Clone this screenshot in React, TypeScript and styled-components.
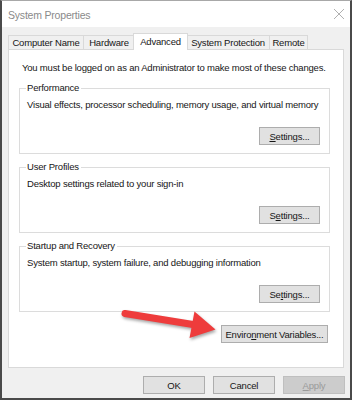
import React from "react";
import styled, { createGlobalStyle } from "styled-components";

const Global = createGlobalStyle`
  html, body { margin: 0; padding: 0; background: #ffffff; }
  body { font-family: "Liberation Sans", Arial, sans-serif; }
`;

const Window = styled.div`
  position: relative;
  box-sizing: border-box;
  width: 352px;
  height: 400px;
  border: 2px solid #4a4a4a;
  border-top: 1px solid #a8a8a8;
  display: flex;
  flex-direction: column;
  background: #f0f0f0;
  font-family: "Liberation Sans", Arial, sans-serif;
  font-size: 9.5px;
  letter-spacing: -0.2px;
  color: #161616;
  overflow: hidden;
`;

const TitleBar = styled.div`
  height: 26px;
  background: #ffffff;
  display: flex;
  align-items: center;
  justify-content: space-between;
  padding: 0 4px 0 6px;
  flex-shrink: 0;
`;

const Title = styled.span`
  font-size: 10.5px;
  letter-spacing: -0.2px;
  color: #8a8a8a;
  margin-top: 1px;
`;

const Body = styled.div`
  flex: 1;
  display: flex;
  flex-direction: column;
  padding: 6px 6px 6px 6px;
`;

const TabRow = styled.div`
  display: flex;
  align-items: flex-end;
  height: 16px;
`;

const Tab = styled.div<{ $active?: boolean; $w: number }>`
  position: relative;
  box-sizing: border-box;
  width: ${(p) => p.$w}px;
  height: ${(p) => (p.$active ? 17 : 14)}px;
  margin-left: ${(p) => (p.$active ? -2 : -1)}px;
  margin-right: ${(p) => (p.$active ? -1 : 0)}px;
  margin-bottom: ${(p) => (p.$active ? -1 : 0)}px;
  z-index: ${(p) => (p.$active ? 2 : 1)};
  background: ${(p) => (p.$active ? "#ffffff" : "#f0f0f0")};
  border: 1px solid #d9d9d9;
  border-bottom: none;
  display: flex;
  align-items: center;
  justify-content: center;
  padding-bottom: ${(p) => (p.$active ? 2 : 0)}px;
  white-space: nowrap;
  &:first-child { margin-left: 0; }
`;

const Panel = styled.div`
  box-sizing: border-box;
  height: 319px;
  background: #ffffff;
  border: 1px solid #d9d9d9;
  padding: 12px 12px 0 10px;
  display: flex;
  flex-direction: column;
`;

const Intro = styled.div`
  line-height: 12px;
  margin-left: 3px;
  white-space: nowrap;
`;

const Group = styled.div<{ $mt: number }>`
  position: relative;
  box-sizing: border-box;
  width: 311px;
  height: 66px;
  margin-top: ${(p) => p.$mt}px;
  border: 1px solid #dcdcdc;
  padding: 10px 9px 8px 7px;
  display: flex;
  flex-direction: column;
  justify-content: space-between;
`;

const Legend = styled.span`
  position: absolute;
  top: -7px;
  left: 6px;
  padding: 0 2px 0 1px;
  background: #ffffff;
  line-height: 12px;
`;

const Desc = styled.div`
  line-height: 12px;
  white-space: nowrap;
`;

const Button = styled.button<{ $w: number; $disabled?: boolean }>`
  box-sizing: border-box;
  width: ${(p) => p.$w}px;
  height: 18px;
  padding: 0;
  margin: 0;
  font-family: "Liberation Sans", Arial, sans-serif;
  font-size: 9.5px;
  letter-spacing: -0.2px;
  color: ${(p) => (p.$disabled ? "#9a9a9a" : "#161616")};
  background: ${(p) => (p.$disabled ? "#cccccc" : "#e1e1e1")};
  border: 1px solid ${(p) => (p.$disabled ? "#bfbfbf" : "#adadad")};
  display: flex;
  align-items: center;
  justify-content: center;
  white-space: nowrap;
`;

const ButtonRight = styled.div`
  display: flex;
  justify-content: flex-end;
`;

const EnvRow = styled(ButtonRight)`
  margin-top: 13px;
  width: 309px;
`;

const Footer = styled.div`
  display: flex;
  justify-content: flex-end;
  gap: 8px;
  margin-top: 8px;
  margin-right: -1px;
`;

const Mn = styled.span`
  text-decoration: underline;
  text-underline-offset: 1px;
`;

const ArrowSvg = styled.svg`
  position: absolute;
  left: 110px;
  top: 298px;
  width: 115px;
  height: 48px;
  pointer-events: none;
  filter: drop-shadow(1px 2px 1.5px rgba(0, 0, 0, 0.35));
`;

const CloseIcon = () => (
  <svg width="14" height="14" viewBox="0 0 14 14">
    <path d="M2 2 L12 12 M12 2 L2 12" stroke="#b0b0b0" strokeWidth="1" fill="none" />
  </svg>
);

const tabs = [
  { label: "Computer Name", w: 76 },
  { label: "Hardware", w: 52 },
  { label: "Advanced", w: 55, active: true },
  { label: "System Protection", w: 84 },
  { label: "Remote", w: 39 },
];

export default function App() {
  return (
    <>
      <Global />
      <Window>
        <TitleBar>
          <Title>System Properties</Title>
          <CloseIcon />
        </TitleBar>
        <Body>
          <TabRow>
            {tabs.map((t) => (
              <Tab key={t.label} $w={t.w} $active={t.active}>
                {t.label}
              </Tab>
            ))}
          </TabRow>
          <Panel>
            <Intro>You must be logged on as an Administrator to make most of these changes.</Intro>
            <Group $mt={14}>
              <Legend>Performance</Legend>
              <Desc>Visual effects, processor scheduling, memory usage, and virtual memory</Desc>
              <ButtonRight>
                <Button $w={61}>
                  <Mn>S</Mn>ettings...
                </Button>
              </ButtonRight>
            </Group>
            <Group $mt={13}>
              <Legend>User Profiles</Legend>
              <Desc>Desktop settings related to your sign-in</Desc>
              <ButtonRight>
                <Button $w={61}>
                  S<Mn>e</Mn>ttings...
                </Button>
              </ButtonRight>
            </Group>
            <Group $mt={13}>
              <Legend>Startup and Recovery</Legend>
              <Desc>System startup, system failure, and debugging information</Desc>
              <ButtonRight>
                <Button $w={61}>
                  Se<Mn>t</Mn>tings...
                </Button>
              </ButtonRight>
            </Group>
            <EnvRow>
              <Button $w={107}>
                Enviro<Mn>n</Mn>ment Variables...
              </Button>
            </EnvRow>
          </Panel>
          <Footer>
            <Button $w={62}>OK</Button>
            <Button $w={62}>Cancel</Button>
            <Button $w={62} $disabled>
              <Mn>A</Mn>pply
            </Button>
          </Footer>
        </Body>
        <ArrowSvg viewBox="110 298 115 48">
          <path
            d="M123 312.5 L191 323.5"
            stroke="#ee3c3c"
            strokeWidth="7"
            strokeLinecap="round"
            fill="none"
          />
          <path d="M192.5 310.5 L213.5 328.5 L187.5 337 Z" fill="#ee3c3c" />
        </ArrowSvg>
      </Window>
    </>
  );
}
